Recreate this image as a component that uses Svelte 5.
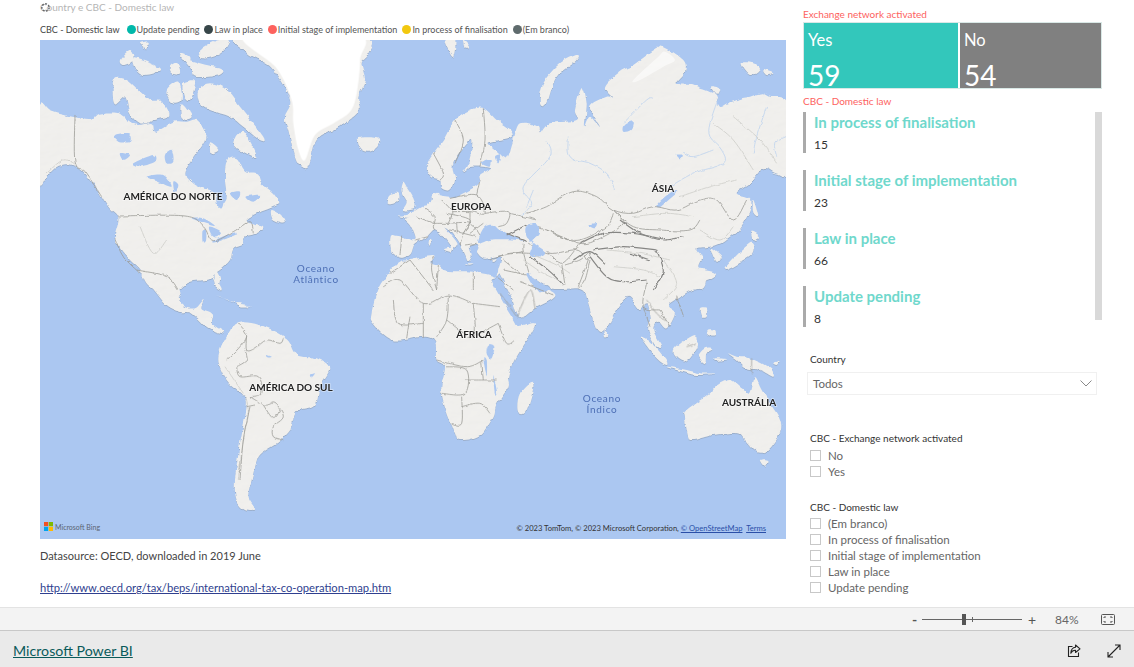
<script>
    const legend = [
        { name: 'Update pending', color: '#01b8aa' },
        { name: 'Law in place', color: '#374649' },
        { name: 'Initial stage of implementation', color: '#fd625e' },
        { name: 'In process of finalisation', color: '#f2c80f' },
        { name: '(Em branco)', color: '#5f6b6d' }
    ];
    const stats = [
        { name: 'In process of finalisation', value: 15 },
        { name: 'Initial stage of implementation', value: 23 },
        { name: 'Law in place', value: 66 },
        { name: 'Update pending', value: 8 }
    ];
    const networkOptions = ['No', 'Yes'];
    const lawOptions = ['(Em branco)', 'In process of finalisation', 'Initial stage of implementation', 'Law in place', 'Update pending'];

    // catmull-rom through the traced points, coastlines look bad with straight segments
    function curve(str, closed = true) {
        const p = str.trim().split(/\s+/).map(s => s.split(',').map(Number));
        const n = p.length;
        const at = i => closed ? p[(i + n) % n] : p[Math.max(0, Math.min(n - 1, i))];
        let d = `M${p[0][0]},${p[0][1]}`;
        const last = closed ? n : n - 1;
        for (let i = 0; i < last; i++) {
            const [a, b, c, e] = [at(i - 1), at(i), at(i + 1), at(i + 2)];
            const c1 = [b[0] + (c[0] - a[0]) / 6, b[1] + (c[1] - a[1]) / 6];
            const c2 = [c[0] - (e[0] - b[0]) / 6, c[1] - (e[1] - b[1]) / 6];
            d += `C${c1[0].toFixed(1)},${c1[1].toFixed(1)} ${c2[0].toFixed(1)},${c2[1].toFixed(1)} ${c[0]},${c[1]}`;
        }
        return closed ? d + 'Z' : d;
    }

    // outlines were traced on 3x crops, so each group has its crop origin
    const regions = [
        {
            t: 'translate(40 40) scale(.3333)',
            polys: [
                '-5,200 30,212 60,222 105,232 150,240 175,222 225,218 255,235 290,255 335,250 345,275 375,260 400,245 440,245 470,240 495,270 497,300 470,340 440,385 440,410 475,440 510,450 535,470 545,490 560,475 555,420 560,365 590,355 615,395 650,400 665,430 700,460 715,490 690,505 650,520 620,540 640,550 670,560 650,580 615,590 610,610 580,625 570,660 540,690 520,705 535,730 545,750 530,745 518,715 500,720 450,725 420,745 415,770 330,740 300,690 270,660 240,625 225,590 235,535 205,500 170,445 135,400 100,375 55,378 20,410 5,432 -5,420',
                '218,150 225,115 260,120 290,145 330,180 365,185 385,225 345,240 300,250 270,220 255,170 225,190',
                '380,150 415,125 425,180 395,185', '430,130 465,125 450,180 432,170', '425,190 455,230 425,235',
                '475,150 510,130 560,150 600,200 670,290 660,300 610,260 570,230 510,210 480,190',
                '590,285 615,280 650,350 610,335 580,320', '240,60 270,30 280,60 250,75',
                '280,55 330,70 360,90 310,105 285,85', '440,60 500,75 545,85 535,105 470,110 455,85',
                '300,10 325,5 320,25', '420,40 450,50 445,70', '480,30 530,0 570,0 545,40 490,55',
                '390,80 410,70 420,100 395,100', '695,510 730,530 735,550 700,540', '510,310 535,330 510,340',
                '955,295 1015,295 1015,320 985,335 960,325'
            ],
            water: [
                '225,285 265,280 270,305 235,305', '280,370 340,345 345,365 295,380', '375,345 395,330 400,365 380,370',
                '320,410 370,405 395,440 355,425', '400,425 415,435 405,460', '455,535 490,535 525,558 490,548',
                '488,570 498,572 498,602 488,605', '508,560 542,575 530,592 515,585', '520,602 580,578 585,585 530,606',
                '530,470 550,480 545,505 532,495', '570,460 600,455 590,480', '620,470 660,465 640,485', '240,340 270,345 250,360'
            ],
            lines: [
                '105,225 105,365 135,395 185,470', '235,528 435,528 490,560 520,602 580,575 630,545 640,580',
                '290,690 380,710 415,750', '225,595 250,650 300,700'
            ],
            ridges: ['20,400 70,360 110,375', '300,560 340,640 380,600']
        },
        {
            t: 'translate(400 40) scale(.3333)',
            polys: [
                '-5,528 60,540 150,570 310,640 330,690 390,700 520,720 800,740 905,745 915,690 895,680 905,650 890,625 930,620 960,610 990,590 1020,565 1050,510 1050,475 1010,460 1050,430 1090,385 1130,400 1165,390 1165,195 1110,170 1085,160 1050,170 1025,175 985,190 960,200 945,165 900,145 875,135 830,130 855,95 850,60 790,20 770,25 700,75 660,95 615,140 640,175 620,170 570,200 600,260 570,230 555,255 560,190 545,145 525,210 530,240 450,250 420,280 415,260 360,250 340,300 320,355 290,335 265,310 295,300 335,290 330,270 290,240 250,205 210,210 165,240 130,300 100,340 80,380 95,410 120,420 125,445 150,450 165,420 160,370 215,300 205,370 190,395 215,380 270,385 240,405 240,425 225,440 190,460 150,480 120,490 115,460 100,465 95,490 65,500 40,515 20,525',
                '935,625 965,650 950,665 935,630', '420,190 430,130 480,70 530,45 530,60 470,110 440,190',
                '975,685 1050,610 1060,640 1000,680', '1060,480 1075,530 1060,520', '1055,575 1080,590 1060,600',
                '135,0 165,0 160,50 145,30', '190,0 210,20 195,25', '1025,70 1060,70 1080,85 1050,105', '1090,90 1120,100 1100,105',
                '930,140 960,145 950,165'
            ],
            water: [
                '770,495 795,470 825,450 830,458 800,485 778,502', '672,255 700,245 695,270 670,275', '285,350 300,345 295,370',
                '245,370 270,360 268,380', '830,345 845,345 840,355', '565,555 590,550 585,565'
            ],
            rivers: [
                '505,290 510,350 570,370 620,400 645,450', '440,300 450,350 370,440 395,490 360,530', '955,175 930,250 930,290 965,330 970,370 880,400 810,440',
                '940,330 880,350 850,340', '1100,200 1070,290 1060,340', '1158,290 1125,310 1130,350', '670,250 740,180 760,175', '400,450 380,500'
            ],
            lines: [
                '100,340 130,400 120,420', '165,240 190,300 165,370', '250,205 255,300 240,380',
                '380,520 440,500 520,455 590,470 640,510 700,520 760,500 830,510 900,480 950,480 1000,540 1040,480',
                '640,510 700,560 780,570 870,570 900,540', '440,570 480,590 540,600 620,560 640,520', '385,610 450,640 530,630 560,660',
                '440,570 385,555'
            ],
            ridges: ['940,250 1000,300 1060,390', '1000,230 1080,300 1130,370', '840,470 930,440 1010,420', '700,530 800,520 880,530', '900,570 960,600 1000,560'],
            dark: ['660,540 720,580 790,600 850,590']
        },
        {
            // europe and the mediterranean
            t: 'translate(370 180) scale(.3333)',
            polys: [
                '62,170 85,168 135,180 125,140 105,115 140,110 165,80 190,60 215,50 480,100 500,260 400,275 380,290 393,240 385,228 345,236 322,218 325,205 322,192 300,200 305,225 295,240 285,220 270,190 238,145 222,140 230,150 262,190 250,205 248,212 235,190 215,165 195,148 180,160 165,175 135,192 122,222 100,233 80,228 65,220',
                '100,5 115,30 130,55 135,85 100,90 110,65 95,35', '60,45 85,40 85,65 55,75',
                '175,178 182,180 180,195 173,195', '222,208 245,203 240,215', '285,250 310,250 298,254', '365,238 380,235 372,243'
            ],
            water: ['330,165 345,140 370,135 385,148 395,150 420,165 465,185 445,180 400,178 360,180 326,190'],
            lines: [
                '135,180 175,170', '165,85 195,110 190,140 195,150', '215,60 245,95 235,130', '190,130 235,130', '240,55 320,45 345,100 300,95 245,95',
                '345,100 415,95 410,130 385,140', '235,130 300,130 330,165', '300,130 280,160 270,195', '240,150 280,160 320,170', '285,195 320,190',
                '385,228 460,215', '460,190 460,215 480,290', '400,240 450,280', '205,255 200,330', '310,275 310,330', '120,240 60,280', '320,45 330,0',
                '230,100 300,120 280,160', '95,170 90,225', '120,240 190,330', '190,228 185,270 200,330', '420,100 500,120', '380,290 430,330',
                '140,110 190,130', '260,130 262,160', '300,95 300,130', '340,130 300,160'
            ],
            dark: ['410,160 470,185']
        },
        {
            // middle east and tibet ridges
            t: 'translate(490 210) scale(.3333)',
            polys: [],
            water: ['110,195 135,235 165,245 172,232 130,205 118,190', '108,50 135,40 150,70 130,95 165,125 145,140 120,135 128,100 110,80'],
            lines: [
                '215,160 225,225', '225,165 270,150 300,130 265,230', '300,150 285,210 265,235', '470,215 460,290 510,300', '170,60 270,100 330,85 400,40 370,0',
                '170,120 215,160 270,100', '510,300 540,350', '460,290 480,350', '0,150 60,130 120,130', '40,180 110,195', '90,215 190,255', '560,260 580,320'
            ],
            ridges: ['100,150 160,190 215,215', '130,135 200,165 240,190', '350,120 450,130 540,150', '370,170 460,180 510,200', '520,150 560,220 520,270'],
            dark: [
                '300,140 350,200 400,215 470,210', '270,100 340,70 430,70 530,90', '250,150 300,125 345,160', '310,120 400,110 500,120', '500,120 520,185 490,240',
                '120,140 180,185 220,225', '420,130 480,150', '110,45 50,75'
            ]
        },
        {
            t: 'translate(140 280) scale(.3333)',
            polys: [
                '715,25 750,-25 780,-55 810,-60 880,-72 875,-50 895,-42 920,-28 1000,-25 1065,-10 1055,0 1080,50 1120,115 1140,140 1185,135 1125,240 1105,290 1105,320 1070,375 1060,410 1020,465 960,480 945,460 905,340 915,260 890,240 885,185 850,170 760,180 700,130 695,100',
                '260,170 295,130 360,135 440,175 470,225 530,235 568,265 540,320 525,375 470,395 450,450 410,490 365,520 350,545 335,600 325,650 345,688 315,690 290,660 285,600 300,490 320,380 310,345 260,300 235,235',
                '0,-30 120,-30 115,30 125,75 165,85 190,60 185,85 215,100 215,130 250,155 235,160 200,140 155,100 120,95 80,75 50,40 20,0',
                '230,45 280,65 345,80 290,70', '290,70 325,80 300,82', '225,-30 240,-5 232,25 225,0'
            ],
            water: ['1045,195 1062,200 1055,235 1042,225', '1030,235 1040,240 1040,285', '1060,285 1072,340 1065,340', '380,225 395,230 385,232', '510,285 525,280 515,292'],
            lines: [
                '260,240 300,200 320,165 295,130', '320,165 320,210 345,205 380,180 420,190 430,175', '290,260 320,240 315,210', '290,260 300,290 355,290 365,340 330,350',
                '330,350 375,375 405,370 430,410 400,440 400,470 430,480', '370,375 400,415 420,390', '320,380 345,375', '330,380 310,480 300,600',
                '730,20 780,0 850,70 925,45 1000,70', '760,60 775,130 850,130', '890,170 920,120 925,45', '1000,70 1080,80', '850,70 850,170', '810,110 800,175',
                '920,120 1000,170 1000,70', '1000,170 1075,130', '890,240 980,260 1030,240', '915,260 980,270 975,340 905,340', '975,300 1040,300 1070,300', '965,380 1020,370 1050,400',
                '965,350 965,430 935,430', '1025,240 1030,300', '1075,130 1100,190 1125,180'
            ],
            ridges: ['315,345 325,400 310,480 295,600', '255,260 310,340']
        },
        {
            t: 'translate(420 280) scale(.3333)',
            polys: [
                '240,-40 250,0 275,55 300,112 345,85 405,50 385,30 360,35 340,0 330,-40',
                '340,-60 380,20 470,25 495,40 505,70 530,150 555,150 590,90 625,50 660,90 680,70 690,120 685,150 705,195 725,200 700,150 715,125 740,145 765,100 745,75 800,40 845,10 850,-30',
                '555,148 565,165 555,168', '330,310 340,320 320,390 300,405 292,380 300,340',
                '800,390 870,340 885,320 930,300 965,325 990,340 1005,295 1025,330 1050,370 1080,420 1080,460 1045,510 1010,515 975,480 950,460 880,465 820,480 805,470 795,410',
                '1020,540 1045,540 1035,560', '925,220 950,230 990,235 1050,265 1060,290 1020,270 980,265 950,240',
                '665,175 690,185 735,235 740,255 710,235', '740,260 800,270 840,280 885,280 830,285 770,270',
                '765,205 825,165 830,200 800,240 770,230', '835,230 855,205 880,205 860,220 855,250',
                '840,85 860,85 860,110 845,110', '860,150 885,150 885,165 865,165', '1060,250 1075,245 1070,255', '885,235 920,238 890,242'
            ],
            water: ['205,195 222,200 215,225 200,220'],
            lines: ['240,40 290,110', '290,110 330,30 345,85', '995,235 995,280', '800,200 830,190', '680,60 710,100 740,125']
        }
    ];
</script>

<div class="page">
    <div class="report">
        <div class="left">
            <div class="title">
                <svg class="spinner" viewBox="0 0 12 12" width="11" height="11" aria-hidden="true">
                    <circle cx="6" cy="6" r="4" fill="none" stroke="#666" stroke-width="1.6" stroke-dasharray="2 1.6" />
                </svg>
                Country e CBC - Domestic law
            </div>
            <div class="legend">
                <span class="legend-title">CBC - Domestic law</span>
                {#each legend as l}
                    <span class="legend-item"><i style="background: {l.color}"></i>{l.name}</span>
                {/each}
            </div>
            <div class="map">
                <svg viewBox="40 40 746 499" width="746" height="499" role="img" aria-label="World map">
                    <defs>
                        <filter id="relief" x="0" y="0" width="100%" height="100%">
                            <feTurbulence type="fractalNoise" baseFrequency="0.11" numOctaves="4" seed="7" result="coast" />
                            <feDisplacementMap in="SourceAlpha" in2="coast" scale="4.5" xChannelSelector="R" yChannelSelector="G" result="shape" />
                            <feTurbulence type="fractalNoise" baseFrequency="0.07 0.13" numOctaves="3" seed="4" result="n" />
                            <feDiffuseLighting in="n" surfaceScale="0.28" lighting-color="#f2f1ee" result="lit">
                                <feDistantLight azimuth="225" elevation="80" />
                            </feDiffuseLighting>
                            <feComposite in="lit" in2="shape" operator="in" result="land" />
                            <feGaussianBlur in="shape" stdDeviation="0.5" result="soft" />
                            <feOffset in="soft" dx="0.3" dy="0.5" result="off" />
                            <feFlood flood-color="#8e9aa8" flood-opacity="0.5" />
                            <feComposite in2="off" operator="in" result="shadow" />
                            <feMerge>
                                <feMergeNode in="shadow" />
                                <feMergeNode in="land" />
                            </feMerge>
                        </filter>
                        <filter id="wobble" x="0" y="0" width="100%" height="100%">
                            <feTurbulence type="fractalNoise" baseFrequency="0.14" numOctaves="3" seed="7" result="w" />
                            <feDisplacementMap in="SourceGraphic" in2="w" scale="3" xChannelSelector="R" yChannelSelector="G" />
                            <feGaussianBlur stdDeviation="0.22" />
                        </filter>
                        <filter id="ice"><feGaussianBlur stdDeviation="1.2" /></filter>
                    </defs>
                    <rect x="40" y="40" width="746" height="499" fill="#abc7f1" />
                    <g filter="url(#relief)">
                        {#each regions as r}
                            <g transform={r.t}>
                                {#each r.polys as p}
                                    <path d={curve(p)} fill="#000" />
                                {/each}
                            </g>
                        {/each}
                        <g transform="translate(40 40) scale(.3333)">
                            <path d={curve('600,-15 960,-15 985,40 965,70 975,120 955,170 955,215 890,265 830,300 805,380 775,370 760,330 745,270 735,230 750,180 700,90 660,60 620,35')} fill="#000" />
                        </g>
                    </g>
                    <g transform="translate(40 40) scale(.3333)" filter="url(#ice)">
                        <path d={curve('615,-15 950,-15 960,60 950,160 930,215 880,250 825,285 795,360 775,330 760,250 755,180 710,85')} fill="#fff" />
                    </g>
                    <g transform="translate(400 40) scale(.3333)" filter="url(#ice)">
                        <path d={curve('775,50 795,35 825,60 790,80 720,120 700,120')} fill="#fff" opacity=".55" />
                    </g>
                    <g filter="url(#wobble)">
                        {#each regions as r}
                            <g transform={r.t}>
                                {#each r.water as w}
                                    <path d={curve(w)} fill="#abc7f1" />
                                {/each}
                                {#each r.rivers ?? [] as v}
                                    <path d={curve(v, false)} class="river" />
                                {/each}
                                {#each r.ridges ?? [] as g}
                                    <path d={curve(g, false)} class="ridge" />
                                {/each}
                                {#each r.lines as l}
                                    <path d={curve(l, false)} class="border" />
                                {/each}
                                {#each r.dark ?? [] as d}
                                    <path d={curve(d, false)} class="border dark" />
                                {/each}
                            </g>
                        {/each}
                    </g>
                    <text class="continent" x="173" y="200">AMÉRICA DO NORTE</text>
                    <text class="continent" x="663" y="192">ÁSIA</text>
                    <text class="continent" x="471" y="210">EUROPA</text>
                    <text class="continent" x="474" y="338">ÁFRICA</text>
                    <text class="continent" x="291" y="391">AMÉRICA DO SUL</text>
                    <text class="continent" x="749" y="406">AUSTRÁLIA</text>
                    <text class="ocean" x="316" y="272">Oceano</text>
                    <text class="ocean" x="316" y="283">Atlântico</text>
                    <text class="ocean" x="602" y="402">Oceano</text>
                    <text class="ocean" x="602" y="413">Índico</text>
                </svg>
                <div class="bing">
                    <svg viewBox="0 0 9 9" width="9" height="9" aria-hidden="true">
                        <rect width="4.2" height="4.2" fill="#f25022" />
                        <rect x="4.8" width="4.2" height="4.2" fill="#7fba00" />
                        <rect y="4.8" width="4.2" height="4.2" fill="#00a4ef" />
                        <rect x="4.8" y="4.8" width="4.2" height="4.2" fill="#ffb900" />
                    </svg>
                    Microsoft Bing
                </div>
                <div class="attribution">© 2023 TomTom, © 2023 Microsoft Corporation, <u>© OpenStreetMap</u>&nbsp; <u>Terms</u></div>
            </div>
            <p class="source">Datasource: OECD, downloaded in 2019 June</p>
            <a class="source-link" href="#top">http://www.oecd.org/tax/beps/international-tax-co-operation-map.htm</a>
        </div>

        <div class="right">
            <div class="heading first">Exchange network activated</div>
            <div class="cards">
                <div class="card yes"><span>Yes</span><b>59</b></div>
                <div class="card no"><span>No</span><b>54</b></div>
            </div>
            <div class="heading second">CBC - Domestic law</div>
            <div class="stats">
                <div class="stat-list">
                    {#each stats as s}
                        <div class="stat">
                            <div class="stat-name">{s.name}</div>
                            <div class="stat-value">{s.value}</div>
                        </div>
                    {/each}
                </div>
                <div class="scrollbar"></div>
            </div>

            <div class="slicer-title country">Country</div>
            <div class="dropdown">
                <span>Todos</span>
                <svg viewBox="0 0 12 7" width="12" height="7" aria-hidden="true">
                    <path d="M.5.5 6 6l5.500-5.500" fill="none" stroke="#8a8a8a" />
                </svg>
            </div>

            <div class="slicer-title network">CBC - Exchange network activated</div>
            {#each networkOptions as o}
                <div class="check"><i></i>{o}</div>
            {/each}

            <div class="slicer-title law">CBC - Domestic law</div>
            {#each lawOptions as o}
                <div class="check"><i></i>{o}</div>
            {/each}
        </div>
    </div>

    <div class="zoombar">
        <span class="minus">-</span>
        <div class="slider"><em></em><s></s></div>
        <span class="plus">+</span>
        <span class="percent">84%</span>
        <svg class="fit" viewBox="0 0 14 11" width="14" height="11" aria-hidden="true">
            <rect x=".5" y=".5" width="13" height="10" rx="1" fill="none" stroke="#555" />
            <path d="M3 4V3h2M9 3h2v1M11 7v1H9M5 8H3V7" fill="none" stroke="#555" />
        </svg>
    </div>

    <div class="footer">
        <a href="#top">Microsoft Power BI</a>
        <div class="footer-icons">
            <svg viewBox="0 0 14 14" width="14" height="14" aria-hidden="true">
                <path d="M5.500 2.500H1.500v10h10V8.500" fill="none" stroke="#222" stroke-width="1.100" />
                <path d="M8.500 1 13 4.800 8.500 8.500V6.300C6.200 6.200 4.800 7.200 3.800 9.300 4 5.800 5.800 3.600 8.500 3.300Z" fill="none" stroke="#222" stroke-width="1.100" stroke-linejoin="round" />
            </svg>
            <svg viewBox="0 0 14 14" width="14" height="14" aria-hidden="true">
                <path d="M1 13 13 1M8 1h5v5M1 8v5h5" fill="none" stroke="#222" stroke-width="1.100" />
            </svg>
        </div>
    </div>
</div>

<style>
    :global(body) {
        background: #fff;
    }
    .page {
        width: 1134px;
        height: 667px;
        display: flex;
        flex-direction: column;
        overflow: hidden;
        font-family: Lato, "Open Sans", sans-serif;
    }
    .report {
        height: 607px;
        display: flex;
        flex: none;
    }
    .left {
        width: 746px;
        margin-left: 40px;
        position: relative;
    }
    .title {
        height: 15px;
        padding-top: 1px;
        font-size: 10px;
        line-height: 13px;
        color: #b5b5b5;
        white-space: nowrap;
    }
    .spinner {
        position: absolute;
        left: 0;
        top: 2px;
    }
    .legend {
        height: 24px;
        padding-top: 3px;
        box-sizing: border-box;
        display: flex;
        align-items: center;
        font-size: 9px;
        color: #555;
        white-space: nowrap;
    }
    .legend-title {
        margin-right: 7px;
        color: #444;
    }
    .legend-item {
        display: flex;
        align-items: center;
        margin-right: 5px;
    }
    .legend-item i {
        width: 9px;
        height: 9px;
        border-radius: 50%;
        margin-right: 1px;
    }
    .map {
        position: relative;
        width: 746px;
        height: 499px;
        overflow: hidden;
    }
    .map svg {
        display: block;
    }
    .border {
        fill: none;
        stroke: #9c9c97;
        stroke-width: 2.400;
        stroke-linejoin: round;
    }
    .river {
        fill: none;
        stroke: #b3cdef;
        stroke-width: 2;
    }
    .ridge {
        fill: none;
        stroke: #d4d4d0;
        stroke-width: 3;
    }
    .dark {
        stroke: #868684;
        stroke-width: 3.500;
    }
    .continent {
        font-size: 10px;
        font-weight: 700;
        fill: #222;
        text-anchor: middle;
        paint-order: stroke;
        stroke: rgba(255, 255, 255, .5);
        stroke-width: 1.500px;
    }
    .ocean {
        font-size: 10px;
        letter-spacing: .7px;
        fill: #4d6fb5;
        text-anchor: middle;
    }
    .bing {
        position: absolute;
        left: 4px;
        bottom: 8px;
        display: flex;
        align-items: center;
        gap: 2px;
        font-size: 7px;
        color: #5b6472;
    }
    .attribution {
        position: absolute;
        right: 20px;
        bottom: 6px;
        font-size: 7.600px;
        color: #333;
        white-space: nowrap;
    }
    .attribution u {
        color: #2a4fa8;
    }
    .source {
        margin: 9px 0 0;
        font-size: 11px;
        line-height: 16px;
        color: #444;
    }
    .source-link {
        display: block;
        margin-top: 16px;
        font-size: 11.200px;
        line-height: 16px;
        color: #2f3f8f;
        white-space: nowrap;
    }
    .right {
        width: 299px;
        margin-left: 17px;
    }
    .heading {
        font-size: 10px;
        line-height: 12px;
        color: #fd625e;
    }
    .first {
        margin-top: 8px;
    }
    .second {
        margin-top: 6px;
    }
    .cards {
        display: flex;
        gap: 2px;
        height: 65px;
        margin-top: 2px;
        border: 1px solid #d9e8e6;
    }
    .card {
        display: flex;
        flex-direction: column;
        justify-content: space-between;
        box-sizing: border-box;
        padding: 6px 0 0 4px;
        color: #fff;
    }
    .card span {
        font-size: 16.500px;
        line-height: 22px;
    }
    .card b {
        font-size: 28px;
        line-height: 30px;
        font-weight: 400;
        margin-bottom: -2px;
    }
    .yes {
        width: 154px;
        background: #33c7bb;
    }
    .no {
        flex: 1;
        background: #808080;
    }
    .stats {
        position: relative;
        height: 216px;
        margin-top: 5px;
        overflow: hidden;
    }
    .stat {
        height: 41px;
        margin-bottom: 17px;
        padding-left: 8px;
        border-left: 3px solid #aaa;
    }
    .stat-name {
        font-size: 15px;
        font-weight: 700;
        line-height: 20px;
        color: #6fd8cc;
        white-space: nowrap;
    }
    .stat-value {
        font-size: 12px;
        line-height: 25px;
        color: #333;
    }
    .scrollbar {
        position: absolute;
        right: 0;
        top: 0;
        width: 7px;
        height: 208px;
        background: #d9d9d9;
    }
    .slicer-title {
        padding-left: 7px;
        font-size: 10px;
        line-height: 10px;
        color: #333;
        white-space: nowrap;
    }
    .country {
        margin-top: 26px;
    }
    .dropdown {
        display: flex;
        align-items: center;
        justify-content: space-between;
        box-sizing: border-box;
        width: 290px;
        height: 23px;
        margin: 8px 0 0 4px;
        padding: 0 4px 0 5px;
        border: 1px solid #f0f0f0;
        font-size: 11.500px;
        color: #666;
    }
    .network {
        margin-top: 38px;
    }
    .law {
        margin-top: 23px;
    }
    .check {
        display: flex;
        align-items: center;
        height: 16px;
        margin-left: 7px;
        font-size: 11.500px;
        color: #666;
        white-space: nowrap;
    }
    .network + .check {
        margin-top: 4px;
    }
    .law + .check {
        margin-top: 3px;
    }
    .check i {
        box-sizing: border-box;
        width: 11px;
        height: 11px;
        margin-right: 7px;
        border: 1px solid #c8c8c8;
    }
    .zoombar {
        height: 24px;
        flex: none;
        box-sizing: border-box;
        display: flex;
        align-items: center;
        background: #f3f3f3;
        border-top: 1px solid #e3e3e3;
        border-bottom: 1px solid #c8c8c8;
        color: #555;
    }
    .minus {
        margin-left: 912px;
        width: 10px;
        font-size: 14px;
        font-weight: 700;
    }
    .slider {
        position: relative;
        width: 100px;
        height: 1px;
        background: #666;
    }
    .slider em {
        position: absolute;
        left: 40px;
        top: -5px;
        width: 4px;
        height: 11px;
        background: #555;
    }
    .slider s {
        position: absolute;
        left: 50px;
        top: -2px;
        width: 1px;
        height: 5px;
        background: #666;
    }
    .plus {
        margin-left: 6px;
        width: 12px;
        font-size: 14px;
    }
    .percent {
        margin-left: 15px;
        width: 46px;
        font-size: 12px;
        color: #666;
    }
    .footer {
        flex: 1;
        display: flex;
        align-items: center;
        justify-content: space-between;
        padding: 3px 13px 0;
        background: #eaeaea;
    }
    .footer a {
        font-size: 14.200px;
        color: #0a5a5a;
    }
    .footer-icons {
        display: flex;
        gap: 26px;
    }
</style>
